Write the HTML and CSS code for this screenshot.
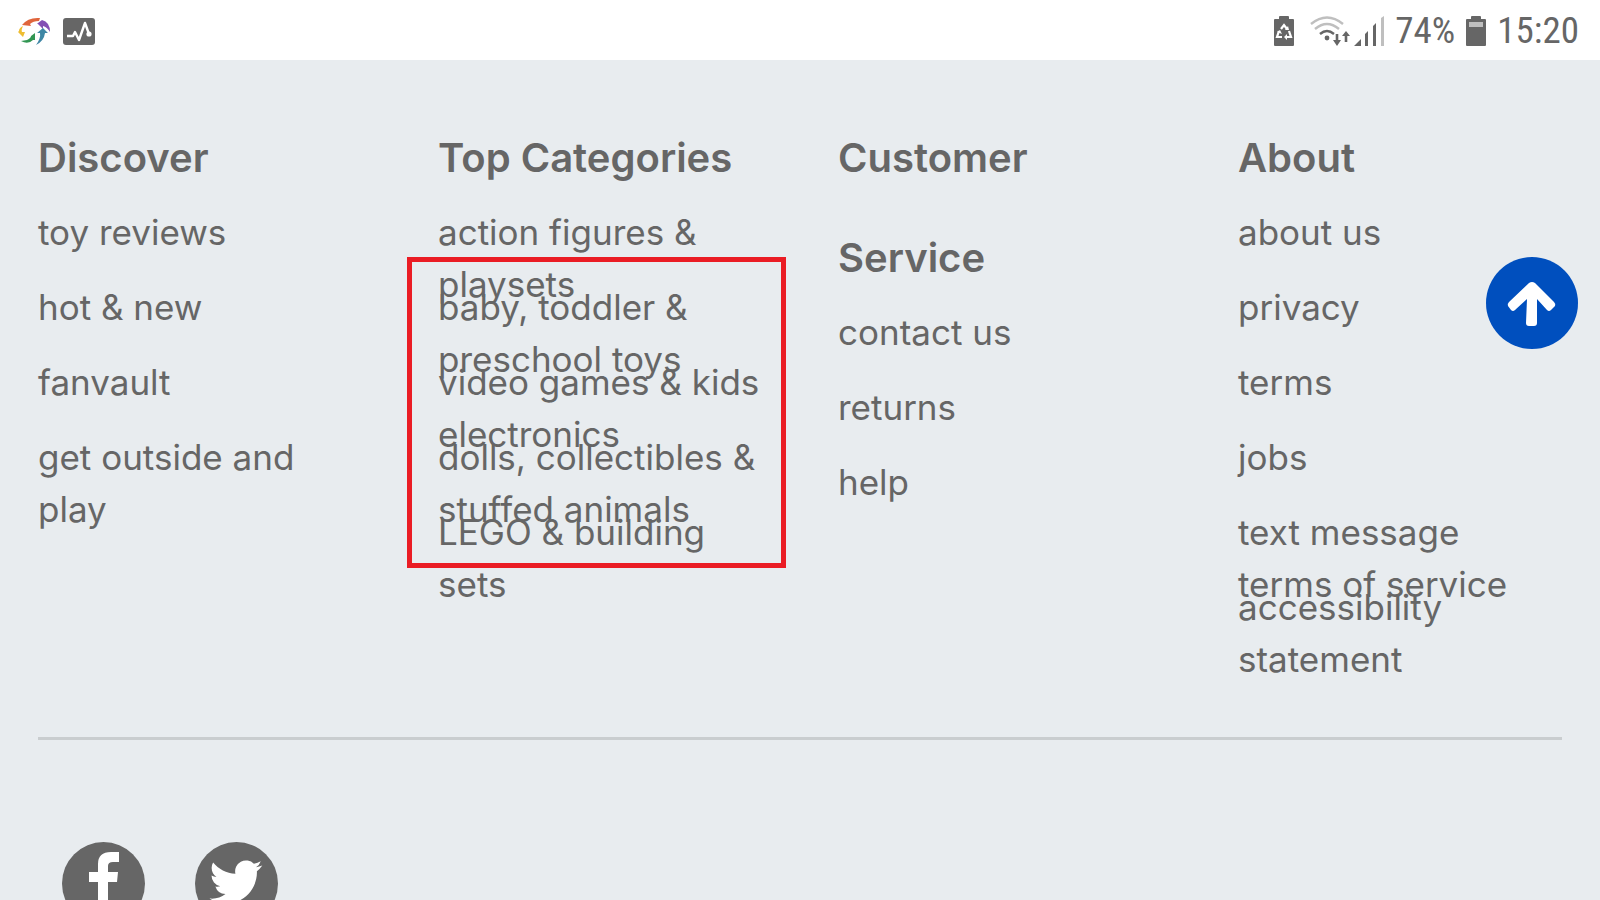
FILE: index.html
```html
<!DOCTYPE html>
<html lang="en">
<head>
<meta charset="utf-8">
<meta name="viewport" content="width=device-width, initial-scale=1">
<title>Store footer</title>
<link rel="stylesheet" href="styles.css">
</head>
<body>
<header class="status">
  <div class="status-left">
    <svg class="app-icon" width="34" height="30" viewBox="0 0 34 30" aria-hidden="true">
      <path d="M5 9Q11 1 23 2L22 5Q16 5 13 8L14 10L5 9L5 6Z" fill="#e0653c"/>
      <path d="M21 7L25 4Q33 6 33 16Q30 11 26 10L26 13L20 7Z" fill="#8450b4"/>
      <path d="M28 17Q27 25 19 29Q24 22 23 17L20 17L26 12L31 17Z" fill="#3e86a5"/>
      <path d="M10 24Q14 22 14 20L18 17L18 24L16 24Q11 29 4 25Z" fill="#329653"/>
      <path d="M6 10Q4 14 5 16L8 16L6 21L1 16L2 15Q2 12 6 10Z" fill="#eebd32"/>
    </svg>
    <svg width="32" height="27" viewBox="0 0 32 27" aria-hidden="true">
      <rect width="32" height="27" rx="3" fill="#666"/>
      <path d="M4 18H10L12 14L16 22L22 5L26 16" fill="none" stroke="#fff" stroke-width="2.4" stroke-linejoin="round"/>
      <circle cx="26" cy="16" r="2.6" fill="#fff"/>
    </svg>
  </div>
  <div class="status-right">
    <svg width="20" height="30" viewBox="0 0 20 30" aria-hidden="true">
      <path d="M5 3V1Q5 0 6 0H14Q15 0 15 1V3H19Q20 3 20 4V29Q20 30 19 30H1Q0 30 0 29V4Q0 3 1 3Z" fill="#666"/>
      <path d="M7 13L10 9L13 13M15 15L17 21L12 21M8 21H3L5 15" fill="none" stroke="#fff" stroke-width="2.2"/>
      <path d="M11 14L15 14L14 10ZM13 18L10 21L13 24ZM3 16L6 14L8 18Z" fill="#fff"/>
    </svg>
    <svg class="wifi" width="40" height="30" viewBox="0 0 40 30" fill="none" aria-hidden="true">
      <path d="M1 8Q17 -5 33 8" stroke="#bfbfbf" stroke-width="2.4"/>
      <path d="M5 13Q17 3 29 13" stroke="#bfbfbf" stroke-width="2.4"/>
      <path d="M10 18Q17 12 24 18" stroke="#666" stroke-width="2.4"/>
      <circle cx="17" cy="22" r="2.4" fill="#666"/>
      <path d="M27 18V25M36 26V19" stroke="#666" stroke-width="2.6"/>
      <path d="M23 24H31L27 30ZM32 20H40L36 15Z" fill="#666"/>
    </svg>
    <svg class="signal" width="30" height="30" viewBox="0 0 30 30" aria-hidden="true">
      <path d="M0 30L7 23V30ZM11 18L14 15V30H11ZM19 10L22 7V30H19Z" fill="#666"/>
      <path d="M27 2L30 0V30H27Z" fill="#bfbfbf"/>
    </svg>
    <span>74%</span>
    <svg width="20" height="30" viewBox="0 0 20 30" aria-hidden="true">
      <path d="M5 3V1Q5 0 6 0H14Q15 0 15 1V3H19Q20 3 20 4V29Q20 30 19 30H1Q0 30 0 29V4Q0 3 1 3Z" fill="#666"/>
      <path d="M3 6H17V11H3Z" fill="#bfbfbf"/>
    </svg>
    <time>15:20</time>
  </div>
</header>
<footer class="footer">
  <nav class="columns" aria-label="Footer">
    <section class="column">
      <h2>Discover</h2>
      <ul>
        <li><a href="#">toy reviews</a></li>
        <li><a href="#">hot &amp; new</a></li>
        <li><a href="#">fanvault</a></li>
        <li><a href="#">get outside and play</a></li>
      </ul>
    </section>
    <section class="column">
      <h2>Top Categories</h2>
      <ul>
        <li><a href="#">action figures &amp; playsets</a></li>
        <li><a href="#">baby, toddler &amp; preschool toys</a></li>
        <li><a href="#">video games &amp; kids electronics</a></li>
        <li><a href="#">dolls, collectibles &amp; stuffed animals</a></li>
        <li><a href="#">LEGO &amp; building sets</a></li>
      </ul>
      <div class="highlight"></div>
    </section>
    <section class="column">
      <h2>Customer Service</h2>
      <ul>
        <li><a href="#">contact us</a></li>
        <li><a href="#">returns</a></li>
        <li><a href="#">help</a></li>
      </ul>
    </section>
    <section class="column">
      <h2>About</h2>
      <ul>
        <li><a href="#">about us</a></li>
        <li><a href="#">privacy</a></li>
        <li><a href="#">terms</a></li>
        <li><a href="#">jobs</a></li>
        <li><a href="#">text message terms&nbsp;of service</a></li>
        <li><a href="#">accessibility statement</a></li>
      </ul>
    </section>
  </nav>
  <hr class="divider">
  <div class="social">
    <a href="#" aria-label="Facebook">
      <svg width="83" height="83" viewBox="0 0 83 83" aria-hidden="true">
        <circle cx="41.5" cy="41.5" r="41.5" fill="#666"/>
        <path d="M57 10V20H51Q46 20 46 24V30H56L55 40H46V70H36V40H27V30H36V22Q36 10 49 10Z" fill="#fff"/>
      </svg>
    </a>
    <a href="#" aria-label="Twitter">
      <svg width="83" height="83" viewBox="0 0 83 83" aria-hidden="true">
        <circle cx="41.5" cy="41.5" r="41.5" fill="#666"/>
        <path transform="translate(14.5 13.5) scale(2.2)" fill="#fff" d="M23.953 4.57a10 10 0 01-2.825.775 4.958 4.958 0 002.163-2.723c-.951.555-2.005.959-3.127 1.184a4.92 4.92 0 00-8.384 4.482C7.69 8.095 4.067 6.13 1.64 3.162a4.822 4.822 0 00-.666 2.475c0 1.71.87 3.213 2.188 4.096a4.904 4.904 0 01-2.228-.616v.06a4.923 4.923 0 003.946 4.827 4.996 4.996 0 01-2.212.085 4.936 4.936 0 004.604 3.417 9.867 9.867 0 01-6.102 2.105c-.39 0-.779-.023-1.17-.067a13.995 13.995 0 007.557 2.209c9.053 0 13.998-7.496 13.998-13.985 0-.21 0-.42-.015-.63A9.935 9.935 0 0024 4.59z"/>
      </svg>
    </a>
  </div>
</footer>
<button class="to-top" type="button" aria-label="Back to top">
  <svg width="92" height="92" viewBox="0 0 92 92" aria-hidden="true">
    <path d="M41 42L29 53Q27 55 25 53L22 49Q21 47 23 45L43 26Q46 24 49 26L68 45Q70 47 69 49L65 53Q63 55 61 53L51 42V66Q51 69 48 69H43Q40 69 40 66Z" fill="#fff"/>
  </svg>
</button>
</body>
</html>
```

FILE: styles.css
```css
* {
  box-sizing: border-box;
}

body {
  height: 100vh;
  margin: 0;
  overflow: hidden;
  background: #e8ecef;
  color: #666;
  font-family: Inter, "Open Sans", sans-serif;
}

svg {
  display: block;
  flex: none;
}

.status {
  display: flex;
  justify-content: space-between;
  height: 60px;
  padding: 2px 21px 0 17px;
  background: #fff;
  font-family: "Roboto Condensed", "Liberation Sans Narrow", Roboto, sans-serif;
  font-size: 37px;
  line-height: 60px;
}

.status-left,
.status-right {
  display: flex;
  align-items: center;
}

.status-left {
  gap: 12px;
}

.status-right {
  gap: 11px;
}

.wifi {
  margin-left: 5px;
}

.signal {
  margin-left: -7px;
}

.footer {
  padding-top: 48px;
}

.columns {
  display: grid;
  grid-template-columns: repeat(4, 1fr);
}

.column {
  position: relative;
  padding: 0 38px;
}

h2 {
  margin: 0 0 -2px;
  font-size: 40px;
  font-weight: 600;
  line-height: 100px;
}

ul {
  margin: 0;
  padding: 0;
  list-style: none;
}

li {
  height: 75px;
  font-size: 35px;
  font-weight: 400;
  line-height: 52px;
}

a {
  color: inherit;
  text-decoration: none;
}

.highlight {
  position: absolute;
  top: 149px;
  left: 7px;
  right: 14px;
  height: 311px;
  border: 5px solid #ea1c24;
  pointer-events: none;
}

.divider {
  height: 3px;
  margin: 81px 38px 0;
  border: 0;
  background: #c9cdcf;
}

.social {
  display: flex;
  gap: 50px;
  padding: 102px 62px 0;
}

.to-top {
  position: fixed;
  top: 257px;
  right: 22px;
  width: 92px;
  height: 92px;
  padding: 0;
  border: 0;
  border-radius: 50%;
  background: #004fbe;
  cursor: pointer;
}
```
